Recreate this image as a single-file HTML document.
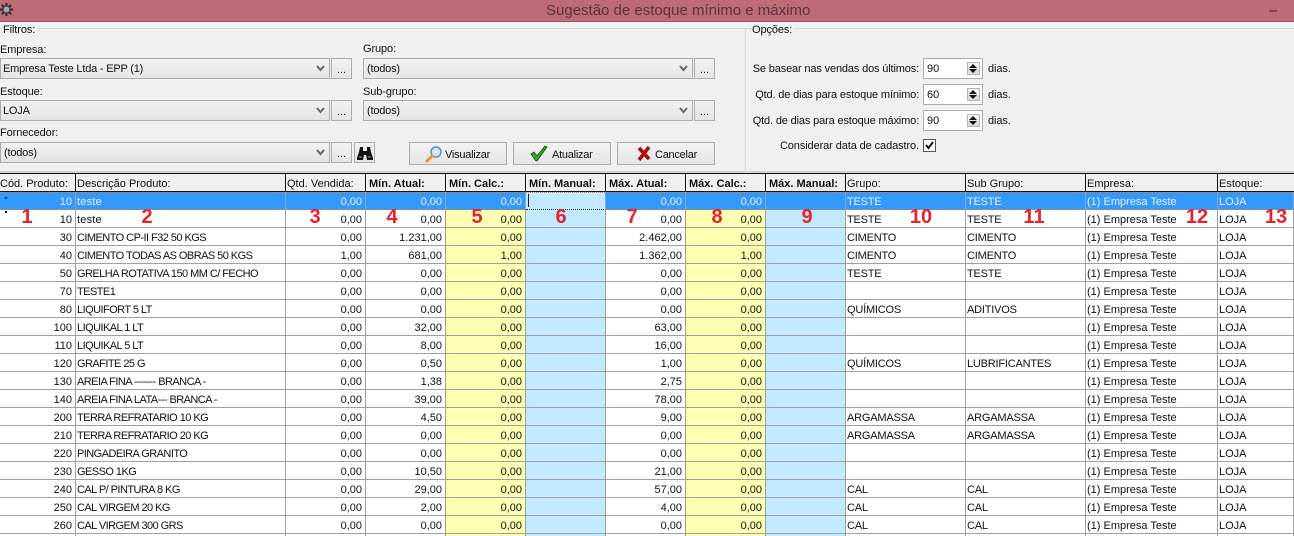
<!DOCTYPE html>
<html lang="pt"><head><meta charset="utf-8"><title>Sugestão de estoque mínimo e máximo</title>
<style>
*{box-sizing:border-box}
html,body{margin:0;padding:0;width:1294px;height:536px;overflow:hidden;background:#f0f0f0}
#w{position:relative;width:1294px;height:536px;overflow:hidden;background:#f0f0f0;font:11px "Liberation Sans",sans-serif;color:#111}
.a{position:absolute;white-space:nowrap}
#tb{left:0;top:0;width:1294px;height:22px;background:#bf6a77;border-bottom:1px solid #a85562}
#tt{left:546px;top:2px;font-size:15px;color:#59353c}
.l{height:14px;line-height:14px;letter-spacing:-.1px}
.c,.b{border:1px solid #acacac;background:linear-gradient(#f2f2f2,#e4e4e4);height:21px;line-height:21px;padding-left:2px;letter-spacing:-.2px}
.b{text-align:center;padding:0;line-height:22px;letter-spacing:0}
.bt{border:1px solid #acacac;background:linear-gradient(#f2f2f2,#e4e4e4);height:23px;width:98px;line-height:24px;letter-spacing:-.25px}
.c svg{position:absolute;right:3px;top:6px}
.sp{border:1px solid #acacac;background:#fff;width:60px;height:21px;line-height:21px;padding-left:3px}
.sp i{position:absolute;left:43px;top:3px;width:13px;height:13px;background:linear-gradient(#f2f2f2 50%,#ddd 50%);border:1px solid #b5b5b5}
.sp i:before,.sp i:after{content:"";position:absolute;left:1px;border:4px solid transparent}
.sp i:before{top:-3px;border-bottom:4px solid #111}
.sp i:after{bottom:-3px;border-top:4px solid #111}
#h div{position:absolute;top:173px;height:19px;background:#f0f0f0;border-top:1px solid #111;border-bottom:1px solid #111;border-right:1px solid #111;line-height:21px;padding-left:1px;overflow:hidden;white-space:nowrap}
#h b{padding-left:2px}
table{position:absolute;left:0;top:192px;border-collapse:separate;border-spacing:0;table-layout:fixed;width:1294px}
td{height:18px;padding:4px 2px 0 1px;border-right:1px solid #a0a0a0;border-bottom:1px solid #a0a0a0;white-space:nowrap;overflow:hidden;line-height:13px;background:#fff;font-size:11px;vertical-align:top}
td:nth-child(1),td:nth-child(3),td:nth-child(4),td:nth-child(5),td:nth-child(7),td:nth-child(8){text-align:right;padding-right:3px}
td:nth-child(2){letter-spacing:-.55px}
td.t:nth-child(2){letter-spacing:.2px}
td:nth-child(10),td:nth-child(11){letter-spacing:-.2px}
td:nth-child(5),td:nth-child(8){background:#ffffb4}
td:nth-child(6),td:nth-child(9){background:#c2e9ff}
tr.s td{background:#3399ff;color:#e8f3ff;border-bottom:1px dotted #d9822b;border-right:1px solid #85a8cc}
tr.s td:nth-child(6){background:#c2e9ff;border-bottom:1px dotted #333}
.n{position:absolute;top:205px;font:bold 20px/24px "Liberation Sans",sans-serif;color:#e8212b;transform:translateX(-50%)}
</style></head><body><div id="w">
<div class="a" id="tb"></div>
<svg class="a" style="left:0;top:3px" width="14" height="14" viewBox="0 0 14 14"><path d="M6.500 0v13M0 6.500h13M1.800 1.800l9.400 9.400M11.200 1.800l-9.400 9.400" stroke="#2e2e2e" stroke-width="2"/><circle cx="6.500" cy="6.500" r="4.500" fill="#3a3a3a"/><circle cx="6.500" cy="6.500" r="3" fill="#a6a6a6"/></svg>
<div class="a" id="tt">Sugestão de estoque mínimo e máximo</div>
<div class="a" style="left:1269px;top:10px;width:8px;height:2px;background:#7d4a52"></div>

<div class="a" style="left:0;top:28px;width:1294px;height:1px;background:#d8d8d8"></div>
<div class="a" style="left:745px;top:28px;width:1px;height:144px;background:#d8d8d8"></div>
<div class="a" style="left:0;top:171px;width:1294px;height:2px;background:#d4d4d4"></div>
<div class="a l" style="left:2px;top:23px;background:#f0f0f0;padding:0 2px 0 1px">Filtros:</div>
<div class="a l" style="left:752px;top:23px;background:#f0f0f0;padding-right:2px">Opções:</div>

<div class="a l" style="left:0;top:43px">Empresa:</div>
<div class="a l" style="left:363px;top:42px">Grupo:</div>
<div class="a l" style="left:0;top:85px">Estoque:</div>
<div class="a l" style="left:363px;top:85px">Sub-grupo:</div>
<div class="a l" style="left:0;top:126px">Fornecedor:</div>

<div class="a c" style="left:0;top:58px;width:330px">Empresa Teste Ltda - EPP (1)<svg width="11" height="8"><path d="M2 1l3.500 4 3.500-4" fill="none" stroke="#666" stroke-width="2"/></svg></div>
<div class="a b" style="left:331px;top:58px;width:21px">...</div>
<div class="a c" style="left:363px;top:58px;width:330px;padding-left:3px">(todos)<svg width="11" height="8"><path d="M2 1l3.500 4 3.500-4" fill="none" stroke="#666" stroke-width="2"/></svg></div>
<div class="a b" style="left:694px;top:58px;width:21px">...</div>
<div class="a c" style="left:0;top:100px;width:330px">LOJA<svg width="11" height="8"><path d="M2 1l3.500 4 3.500-4" fill="none" stroke="#666" stroke-width="2"/></svg></div>
<div class="a b" style="left:331px;top:100px;width:21px">...</div>
<div class="a c" style="left:363px;top:100px;width:330px;padding-left:3px">(todos)<svg width="11" height="8"><path d="M2 1l3.500 4 3.500-4" fill="none" stroke="#666" stroke-width="2"/></svg></div>
<div class="a b" style="left:694px;top:100px;width:21px">...</div>
<div class="a c" style="left:0;top:142px;width:330px;padding-left:3px">(todos)<svg width="11" height="8"><path d="M2 1l3.500 4 3.500-4" fill="none" stroke="#666" stroke-width="2"/></svg></div>
<div class="a b" style="left:331px;top:142px;width:21px">...</div>
<div class="a b" style="left:354px;top:142px;width:21px"><svg style="position:absolute;left:2px;top:3px" width="16" height="15" viewBox="0 0 16 15"><path d="M3 1h3v4h4V1h3l1 5 2 6v2H10l-1-5H7l-1 5H0v-2l2-6z" fill="#111"/><path d="M2 11h3M11 11h3" stroke="#999" stroke-width="1"/></svg></div>

<div class="a bt" style="left:409px;top:142px;padding-left:35px">Visualizar</div>
<svg class="a" style="left:425px;top:145px" width="18" height="18" viewBox="0 0 18 18"><circle cx="11" cy="7" r="5" fill="#d5e8f8" stroke="#5b8fc0" stroke-width="1.500"/><path d="M7 11l-5 5" stroke="#e8962e" stroke-width="3" stroke-linecap="round"/></svg>
<div class="a bt" style="left:513px;top:142px;padding-left:38px">Atualizar</div>
<svg class="a" style="left:530px;top:145px" width="18" height="17" viewBox="0 0 18 17"><path d="M1 9l3-2 3 4 8-10 2 1-10 14H6z" fill="#2fa52a" stroke="#0d4f12" stroke-width=".8"/></svg>
<div class="a bt" style="left:617px;top:142px;padding-left:37px">Cancelar</div>
<svg class="a" style="left:637px;top:146px" width="14" height="15" viewBox="0 0 14 15"><path d="M2 2l10 11M12 1L2 14" stroke="#a80f0f" stroke-width="3.600"/></svg>

<div class="a l" style="right:375px;top:62px;letter-spacing:-.15px">Se basear nas vendas dos últimos:</div>
<div class="a l" style="right:375px;top:88px;letter-spacing:-.15px">Qtd. de dias para estoque mínimo:</div>
<div class="a l" style="right:375px;top:114px;letter-spacing:-.15px">Qtd. de dias para estoque máximo:</div>
<div class="a l" style="right:375px;top:139px">Considerar data de cadastro.</div>
<div class="a sp" style="left:923px;top:58px">90<i></i></div>
<div class="a sp" style="left:923px;top:84px">60<i></i></div>
<div class="a sp" style="left:923px;top:110px">90<i></i></div>
<div class="a l" style="left:988px;top:62px">dias.</div>
<div class="a l" style="left:988px;top:88px">dias.</div>
<div class="a l" style="left:988px;top:114px">dias.</div>
<div class="a" style="left:923px;top:139px;width:13px;height:13px;background:#fff;border:1px solid #555"></div>
<svg class="a" style="left:924px;top:140px" width="11" height="11" viewBox="0 0 11 11"><path d="M2 5l2.500 3L9 2" fill="none" stroke="#111" stroke-width="2"/></svg>

<div id="h">
<div style="left:0;width:76px;padding-left:0">Cód. Produto:</div>
<div style="left:76px;width:210px">Descrição Produto:</div>
<div style="left:286px;width:80px">Qtd. Vendida:</div>
<div style="left:366px;width:80px"><b>Mín. Atual:</b></div>
<div style="left:446px;width:80px"><b>Mín. Calc.:</b></div>
<div style="left:526px;width:80px"><b>Mín. Manual:</b></div>
<div style="left:606px;width:80px"><b>Máx. Atual:</b></div>
<div style="left:686px;width:80px"><b>Máx. Calc.:</b></div>
<div style="left:766px;width:80px"><b>Máx. Manual:</b></div>
<div style="left:846px;width:120px">Grupo:</div>
<div style="left:966px;width:120px">Sub Grupo:</div>
<div style="left:1086px;width:132px">Empresa:</div>
<div style="left:1218px;width:76px;border-right:0">Estoque:</div>
</div>

<table>
<colgroup><col style="width:76px"><col style="width:210px"><col style="width:80px"><col style="width:80px"><col style="width:80px"><col style="width:80px"><col style="width:80px"><col style="width:80px"><col style="width:80px"><col style="width:120px"><col style="width:120px"><col style="width:132px"><col style="width:76px"></colgroup>
<tr class="s"><td>10</td><td class="t">teste</td><td>0,00</td><td>0,00</td><td>0,00</td><td></td><td>0,00</td><td>0,00</td><td></td><td>TESTE</td><td>TESTE</td><td>(1) Empresa Teste</td><td>LOJA</td></tr>
<tr><td>10</td><td class="t">teste</td><td>0,00</td><td>0,00</td><td>0,00</td><td></td><td>0,00</td><td>0,00</td><td></td><td>TESTE</td><td>TESTE</td><td>(1) Empresa Teste</td><td>LOJA</td></tr>
<tr><td>30</td><td>CIMENTO CP-II F32 50 KGS</td><td>0,00</td><td>1.231,00</td><td>0,00</td><td></td><td>2.462,00</td><td>0,00</td><td></td><td>CIMENTO</td><td>CIMENTO</td><td>(1) Empresa Teste</td><td>LOJA</td></tr>
<tr><td>40</td><td>CIMENTO TODAS AS OBRAS 50 KGS</td><td>1,00</td><td>681,00</td><td>1,00</td><td></td><td>1.362,00</td><td>1,00</td><td></td><td>CIMENTO</td><td>CIMENTO</td><td>(1) Empresa Teste</td><td>LOJA</td></tr>
<tr><td>50</td><td>GRELHA ROTATIVA 150 MM C/ FECHO</td><td>0,00</td><td>0,00</td><td>0,00</td><td></td><td>0,00</td><td>0,00</td><td></td><td>TESTE</td><td>TESTE</td><td>(1) Empresa Teste</td><td>LOJA</td></tr>
<tr><td>70</td><td>TESTE1</td><td>0,00</td><td>0,00</td><td>0,00</td><td></td><td>0,00</td><td>0,00</td><td></td><td></td><td></td><td>(1) Empresa Teste</td><td>LOJA</td></tr>
<tr><td>80</td><td>LIQUIFORT 5 LT</td><td>0,00</td><td>0,00</td><td>0,00</td><td></td><td>0,00</td><td>0,00</td><td></td><td>QUÍMICOS</td><td>ADITIVOS</td><td>(1) Empresa Teste</td><td>LOJA</td></tr>
<tr><td>100</td><td>LIQUIKAL 1 LT</td><td>0,00</td><td>32,00</td><td>0,00</td><td></td><td>63,00</td><td>0,00</td><td></td><td></td><td></td><td>(1) Empresa Teste</td><td>LOJA</td></tr>
<tr><td>110</td><td>LIQUIKAL 5 LT</td><td>0,00</td><td>8,00</td><td>0,00</td><td></td><td>16,00</td><td>0,00</td><td></td><td></td><td></td><td>(1) Empresa Teste</td><td>LOJA</td></tr>
<tr><td>120</td><td>GRAFITE 25 G</td><td>0,00</td><td>0,50</td><td>0,00</td><td></td><td>1,00</td><td>0,00</td><td></td><td>QUÍMICOS</td><td>LUBRIFICANTES</td><td>(1) Empresa Teste</td><td>LOJA</td></tr>
<tr><td>130</td><td>AREIA FINA ------- BRANCA -</td><td>0,00</td><td>1,38</td><td>0,00</td><td></td><td>2,75</td><td>0,00</td><td></td><td></td><td></td><td>(1) Empresa Teste</td><td>LOJA</td></tr>
<tr><td>140</td><td>AREIA FINA LATA--- BRANCA -</td><td>0,00</td><td>39,00</td><td>0,00</td><td></td><td>78,00</td><td>0,00</td><td></td><td></td><td></td><td>(1) Empresa Teste</td><td>LOJA</td></tr>
<tr><td>200</td><td>TERRA REFRATARIO 10 KG</td><td>0,00</td><td>4,50</td><td>0,00</td><td></td><td>9,00</td><td>0,00</td><td></td><td>ARGAMASSA</td><td>ARGAMASSA</td><td>(1) Empresa Teste</td><td>LOJA</td></tr>
<tr><td>210</td><td>TERRA REFRATARIO 20 KG</td><td>0,00</td><td>0,00</td><td>0,00</td><td></td><td>0,00</td><td>0,00</td><td></td><td>ARGAMASSA</td><td>ARGAMASSA</td><td>(1) Empresa Teste</td><td>LOJA</td></tr>
<tr><td>220</td><td>PINGADEIRA GRANITO</td><td>0,00</td><td>0,00</td><td>0,00</td><td></td><td>0,00</td><td>0,00</td><td></td><td></td><td></td><td>(1) Empresa Teste</td><td>LOJA</td></tr>
<tr><td>230</td><td>GESSO 1KG</td><td>0,00</td><td>10,50</td><td>0,00</td><td></td><td>21,00</td><td>0,00</td><td></td><td></td><td></td><td>(1) Empresa Teste</td><td>LOJA</td></tr>
<tr><td>240</td><td>CAL P/ PINTURA 8 KG</td><td>0,00</td><td>29,00</td><td>0,00</td><td></td><td>57,00</td><td>0,00</td><td></td><td>CAL</td><td>CAL</td><td>(1) Empresa Teste</td><td>LOJA</td></tr>
<tr><td>250</td><td>CAL VIRGEM 20 KG</td><td>0,00</td><td>2,00</td><td>0,00</td><td></td><td>4,00</td><td>0,00</td><td></td><td>CAL</td><td>CAL</td><td>(1) Empresa Teste</td><td>LOJA</td></tr>
<tr><td>260</td><td>CAL VIRGEM 300 GRS</td><td>0,00</td><td>0,00</td><td>0,00</td><td></td><td>0,00</td><td>0,00</td><td></td><td>CAL</td><td>CAL</td><td>(1) Empresa Teste</td><td>LOJA</td></tr>
<tr><td></td><td></td><td></td><td></td><td></td><td></td><td></td><td></td><td></td><td></td><td></td><td></td><td></td></tr>
</table>
<div class="a" style="left:0;top:192px;width:1294px;height:1px;background:repeating-linear-gradient(90deg,#d9822b 0 1px,transparent 1px 2px)"></div>
<div class="a" style="left:528px;top:194px;width:1px;height:13px;background:#222"></div>
<div class="a" style="left:5px;top:197px;width:2px;height:2px;background:#111"></div>
<div class="a" style="left:5px;top:211px;width:2px;height:2px;background:#111"></div>

<span class="n" style="left:27px">1</span>
<span class="n" style="left:147px">2</span>
<span class="n" style="left:315px">3</span>
<span class="n" style="left:392px">4</span>
<span class="n" style="left:477px">5</span>
<span class="n" style="left:561px">6</span>
<span class="n" style="left:632px">7</span>
<span class="n" style="left:717px">8</span>
<span class="n" style="left:807px">9</span>
<span class="n" style="left:921px">10</span>
<span class="n" style="left:1034px">11</span>
<span class="n" style="left:1197px">12</span>
<span class="n" style="left:1276px">13</span>
</div></body></html>
